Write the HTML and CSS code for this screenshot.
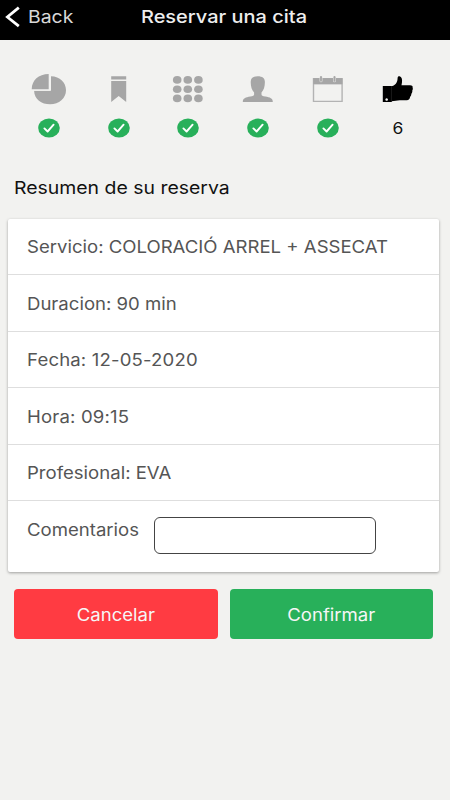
FILE: index.html
```
<!DOCTYPE html>
<html lang="es">
<head>
<meta charset="utf-8">
<title>Reservar una cita</title>
<link rel="stylesheet" href="styles.css">
</head>
<body>
<svg class="defs" width="0" height="0">
  <symbol id="check" viewBox="0 0 24 22">
    <ellipse cx="12" cy="11" rx="10.8" ry="9.5" fill="#28b05a"/>
    <path d="M7.4 11.4l3.2 3.1 6-6.8" fill="none" stroke="#fff" stroke-width="1.9" stroke-linecap="round" stroke-linejoin="round"/>
  </symbol>
</svg>
<header class="bar">
  <a class="back"><svg width="16" height="24" viewBox="0 0 16 24"><path d="M14.8 2.6L3.4 12 14.8 21.2" fill="none" stroke="#fff" stroke-width="2.8"/></svg><span class="t back-text">Back</span></a>
  <h1 class="t title">Reservar una cita</h1>
</header>
<nav class="steps">
  <div class="step"><svg class="icon" viewBox="0 0 40 36"><path d="M22 5.3C31 5.5 37 11.5 37 19.3 37 27.3 30 33.3 21.2 33.3 12.4 33.3 5.3 28 5.1 19.7H22z"/><path d="M20.4 2.6V18.9H2.4" fill="none" stroke="#f2f2f0" stroke-width="1.6"/><path d="M19.7 3V18.2H2.7C2.7 9.5 9.5 3 19.7 3z"/></svg><svg class="ok"><use href="#check"/></svg></div>
  <div class="step"><svg class="icon" viewBox="0 0 40 36"><path d="M12.2 5.2h15v3.4h-15zM12.2 10h15v21l-7.5-6.1-7.5 6.1z"/></svg><svg class="ok"><use href="#check"/></svg></div>
  <div class="step"><svg class="icon" viewBox="0 0 40 36"><g id="dots"><ellipse cx="9.2" cy="8.9" rx="4.3" ry="3.8"/><ellipse cx="19.8" cy="8.9" rx="4.3" ry="3.8"/><ellipse cx="30.4" cy="8.9" rx="4.3" ry="3.8"/></g><use href="#dots" y="9.3"/><use href="#dots" y="18.5"/></svg><svg class="ok"><use href="#check"/></svg></div>
  <div class="step"><svg class="icon" viewBox="0 0 40 36"><path d="M19.7 5.2c4.8 0 7.2 2.1 7.2 5.8 0 4.8-1.2 8.3-3.4 10.4v2.1c0 1 1.2 1.5 3.8 2.1 4.7.9 7.5 1.7 7.5 5.3H4.8c0-3.6 2.8-4.4 7.5-5.3 2.6-.6 3.8-1.1 3.8-2.1v-2.1c-2.2-2.1-3.4-5.6-3.4-10.4 0-3.7 2.2-5.8 7-5.8z"/></svg><svg class="ok"><use href="#check"/></svg></div>
  <div class="step"><svg class="icon" viewBox="0 0 40 36"><path d="M4.8 7.1h30v24h-30zM6.2 13.2v16.6h27.2V13.2z" fill-rule="evenodd" fill="#b3b3b3"/><path d="M5.2 7.2h29.2v6H5.2z"/><path d="M13 6.4v3.4M26.5 6.4v3.4" stroke="#dededc" stroke-width="3" stroke-linecap="round"/><path d="M13 6v3.8M26.5 6v3.8" stroke="#a6a6a6" stroke-width="1.8" stroke-linecap="round"/></svg><svg class="ok"><use href="#check"/></svg></div>
  <div class="step current"><svg class="icon" viewBox="0 0 40 36"><path d="M4.8 15.1h9v15.8h-9zM8.6 27.2a1.3 1.3 0 1 0 .1 0z" fill-rule="evenodd"/><path d="M13.5 15.3c2.6-.6 4.2-2 5.2-4 .7-1.3.8-2.6.9-4.3.1-1.4.9-2 2-1.7 2 .6 2.8 3 2.4 5.9l-.5 3H32c2.3 0 3 1 2.6 2.4.4.9.3 2-.3 2.8.2 1.4-.2 2.5-1 3.3.1 1.4-.4 2.4-1.2 3.1-.2 2.3-1.3 3.4-3.4 3.4h-6.8c-3.2 0-5 1-8.4 1z"/></svg><span class="t num">6</span></div>
</nav>
<main>
  <h2 class="t heading">Resumen de su reserva</h2>
  <section class="card">
    <div class="row"><span class="t">Servicio: COLORACIÓ ARREL + ASSECAT</span></div>
    <div class="row"><span class="t">Duracion: 90 min</span></div>
    <div class="row"><span class="t digits">Fecha: 12-05-2020</span></div>
    <div class="row"><span class="t digits">Hora: 09:15</span></div>
    <div class="row"><span class="t">Profesional: EVA</span></div>
    <div class="row comments"><label class="t" for="comments">Comentarios</label><input id="comments" type="text"></div>
  </section>
  <div class="actions">
    <button class="cancel"><span class="t">Cancelar</span></button>
    <button class="confirm"><span class="t">Confirmar</span></button>
  </div>
</main>
</body>
</html>
```
FILE: styles.css
```
* { box-sizing: border-box; }
body {
  margin: 0;
  height: 800px;
  overflow: hidden;
  background: #f2f2f0;
  font-family: Inter, "Liberation Sans", sans-serif;
  font-size: 17px;
  line-height: 24px;
  color: #555;
}
.defs { position: absolute; }
.t { display: inline-block; white-space: nowrap; transform: scaleX(1.092); transform-origin: 0 50%; }
.digits { letter-spacing: .15px; }
.bar {
  height: 40px;
  padding: 5px 4px 0;
  background: #000;
  color: #fff;
  display: grid;
  grid-template-columns: 137px 1fr;
  align-items: start;
}
.back { display: flex; gap: 8px; }
.back-text { color: #d8d8d8; font-size: 17.5px; transform: scaleX(1.11); }
.title { margin: 0; justify-self: start; font-size: 17.5px; font-weight: 450; color: #eee; transform: scaleX(1.14); }
.steps { display: grid; grid-template-columns: repeat(6, 69.8px); padding: 31px 0 0 14px; height: 105px; }
.step { display: flex; flex-direction: column; align-items: center; }
.icon { width: 40px; height: 36px; fill: #a6a6a6; }
.ok { width: 24px; height: 22px; margin-top: 10px; }
.current .icon { fill: #000; }
.num { color: #111; font-size: 16px; margin-top: 9px; transform-origin: 50% 50%; }
.heading { margin: 31px 0 0 14px; font-size: 17.5px; font-weight: 400; color: #111; transform: scaleX(1.11); }
.card {
  margin: 19px 11px 0 8px;
  height: 353px;
  background: #fff;
  border-radius: 2px;
  box-shadow: 0 1px 3px rgba(0, 0, 0, .35);
  display: grid;
  grid-template-rows: repeat(5, 56.4px) 1fr;
}
.row { padding: 16.4px 0 0 19px; border-bottom: 1px solid #dedede; }
.row:last-child { border: 0; }
.comments { display: grid; grid-template-columns: 127px 222px; align-items: start; }
.comments label { justify-self: start; margin-top: .6px; }
.comments input {
  width: 222px;
  height: 37px;
  border: 1.5px solid #444;
  border-radius: 6px;
  background: #fff;
  padding: 0 8px;
  font: inherit;
}
.actions { display: grid; grid-template-columns: 203.5px 203.5px; gap: 12px; margin: 16.5px 0 0 14px; }
.actions button { height: 50px; padding: 2px 0 0; border: 0; border-radius: 4px; font: inherit; color: #fff; }
.actions .t { transform-origin: 50% 50%; color: #f6f6f6; }
.cancel { background: #ff3b42; }
.confirm { background: #28b05a; }
```
